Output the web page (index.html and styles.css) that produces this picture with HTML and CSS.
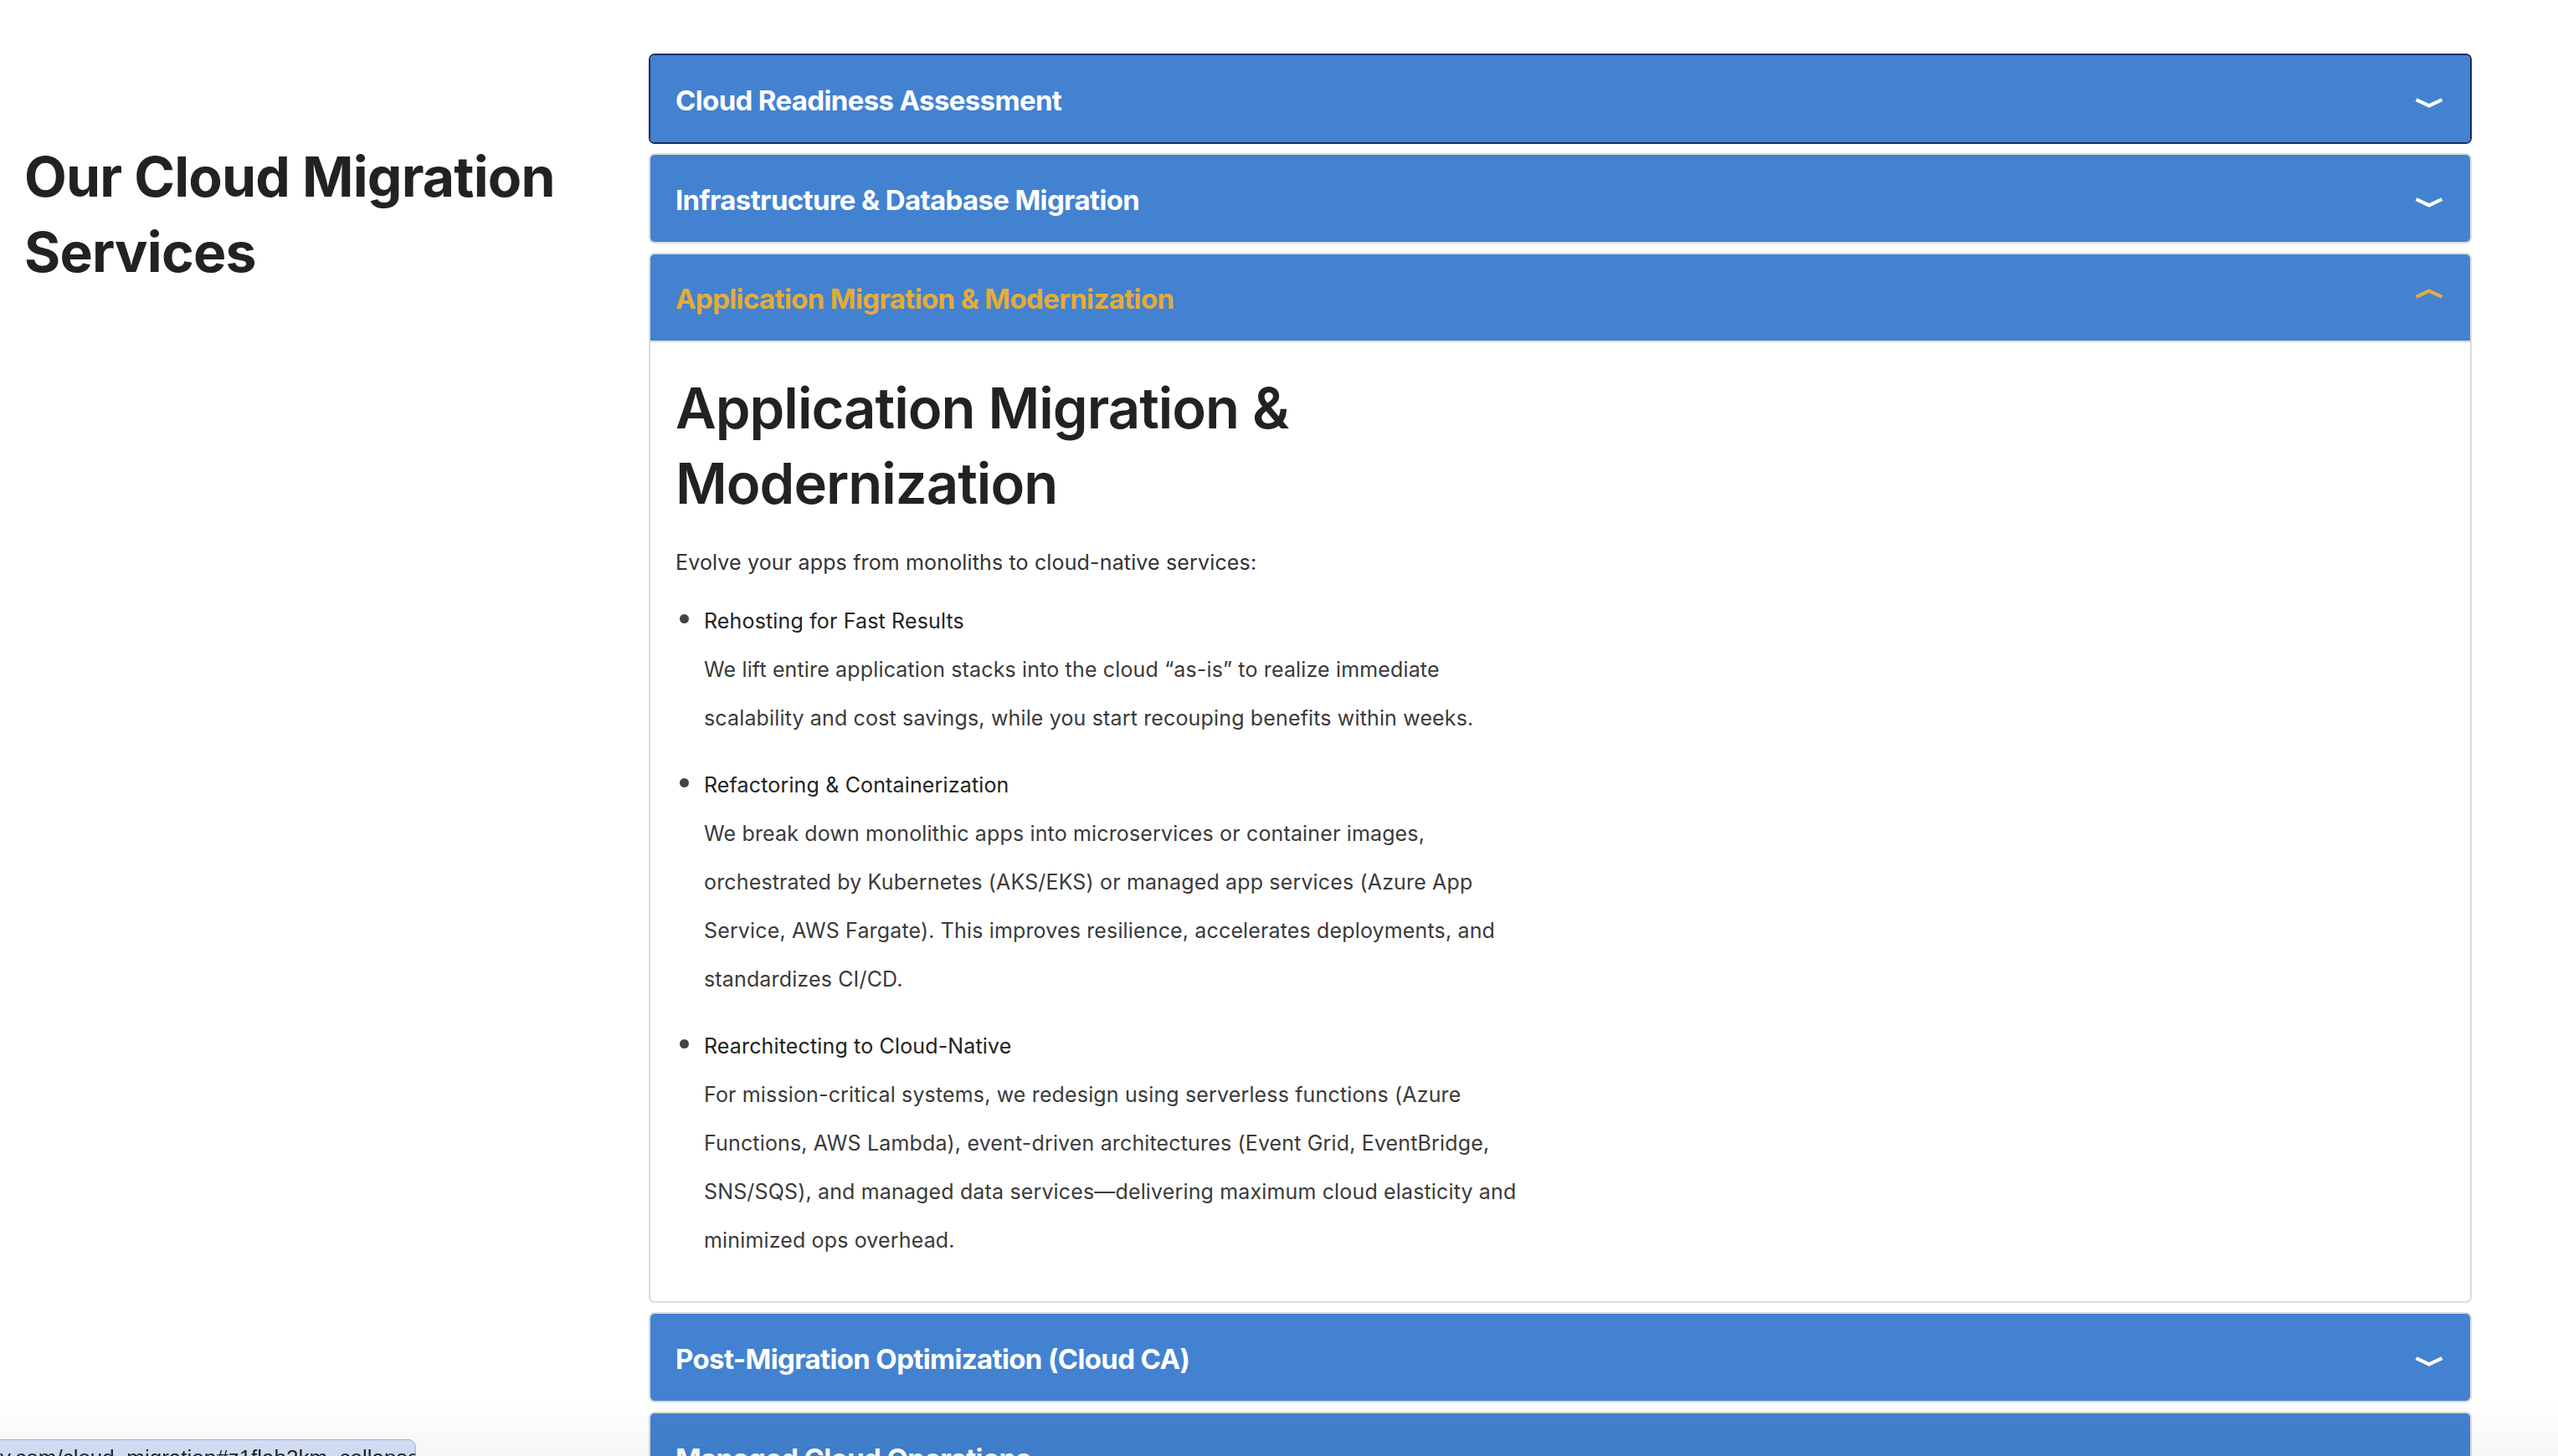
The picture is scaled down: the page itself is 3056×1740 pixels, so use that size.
FILE: index.html
```html
<!DOCTYPE html>
<html lang="en">
<head>
<meta charset="utf-8">
<title>Our Cloud Migration Services</title>
<link rel="stylesheet" href="styles.css">
</head>
<body>
<main class="page">
  <section class="intro">
    <h1 class="intro-title">Our Cloud Migration Services</h1>
  </section>
  <section class="accordion">
    <div class="acc-item acc-focus">
      <button class="acc-head">
        <span class="acc-label">Cloud Readiness Assessment</span>
        <svg class="chev" viewBox="0 0 32 32"><polyline points="1.5,17 16,24 30.5,17"/></svg>
      </button>
    </div>
    <div class="acc-item">
      <button class="acc-head">
        <span class="acc-label">Infrastructure &amp; Database Migration</span>
        <svg class="chev" viewBox="0 0 32 32"><polyline points="1.5,17 16,24 30.5,17"/></svg>
      </button>
    </div>
    <div class="acc-item acc-open">
      <button class="acc-head">
        <span class="acc-label">Application Migration &amp; Modernization</span>
        <svg class="chev chev-up" viewBox="0 0 32 32"><polyline points="1.5,17 16,24 30.5,17"/></svg>
      </button>
      <div class="acc-body">
        <div class="acc-content">
          <h2 class="body-title">Application Migration &amp; Modernization</h2>
          <p class="lead">Evolve your apps from monoliths to cloud-native services:</p>
          <ul class="points">
            <li>
              <p class="point-title">Rehosting for Fast Results</p>
              <p class="point-text">We lift entire application stacks into the cloud “as-is” to realize immediate scalability and cost savings, while you start recouping benefits within weeks.</p>
            </li>
            <li>
              <p class="point-title">Refactoring &amp; Containerization</p>
              <p class="point-text">We break down monolithic apps into microservices or container images, orchestrated by Kubernetes (AKS/EKS) or managed app services (Azure App Service, AWS Fargate). This improves resilience, accelerates deployments, and standardizes CI/CD.</p>
            </li>
            <li>
              <p class="point-title">Rearchitecting to Cloud-Native</p>
              <p class="point-text">For mission-critical systems, we redesign using serverless functions (Azure Functions, AWS Lambda), event-driven architectures (Event Grid, EventBridge, SNS/SQS), and managed data services—delivering maximum cloud elasticity and minimized ops overhead.</p>
            </li>
          </ul>
        </div>
      </div>
    </div>
    <div class="acc-item">
      <button class="acc-head">
        <span class="acc-label">Post-Migration Optimization (Cloud CA)</span>
        <svg class="chev" viewBox="0 0 32 32"><polyline points="1.5,17 16,24 30.5,17"/></svg>
      </button>
    </div>
    <div class="acc-item">
      <button class="acc-head">
        <span class="acc-label">Managed Cloud Operations</span>
        <svg class="chev" viewBox="0 0 32 32"><polyline points="1.5,17 16,24 30.5,17"/></svg>
      </button>
    </div>
  </section>
</main>
<div class="bottom-fade"></div>
<div class="status-url">y.com/cloud_migration#z1flab2km_collapse</div>
</body>
</html>
```
FILE: styles.css
```css
* { box-sizing: border-box; }

html, body {
  margin: 0;
  padding: 0;
  background: #ffffff;
}

body {
  font-family: Inter, "Noto Sans", "Liberation Sans", sans-serif;
  color: #222222;
}

.page {
  display: grid;
  grid-template-columns: 775px 2178px;
  padding-top: 64px;
  padding-bottom: 40px;
}

.intro {
  padding-left: 29px;
}

.intro-title {
  margin: 102px 0 0;
  font-size: 66px;
  line-height: 90px;
  font-weight: 700;
  letter-spacing: -0.8px;
  color: #222222;
  max-width: 720px;
}

.accordion {
  display: flex;
  flex-direction: column;
  gap: 11px;
}

.acc-item {
  border: 2px solid #dcdcdc;
  border-radius: 7px;
  overflow: hidden;
  background: #ffffff;
}

.acc-focus {
  border-color: #1a2b6a;
}

.acc-head {
  display: flex;
  align-items: center;
  justify-content: space-between;
  width: 100%;
  height: 104px;
  margin: 0;
  padding: 3px 32px 0 30px;
  border: 0;
  background: #4382d0;
  color: #ffffff;
  font-family: Inter, "Noto Sans", sans-serif;
  font-size: 33px;
  font-weight: 700;
  letter-spacing: -0.65px;
  text-align: left;
  cursor: pointer;
}

.acc-head .chev {
  margin-top: -3px;
}

.acc-open .acc-head {
  color: #e4ac38;
  border-bottom: 2px solid #dcdcdc;
  height: 105px;
}

.chev {
  width: 34px;
  height: 34px;
  flex: none;
  fill: none;
  stroke: #ffffff;
  stroke-width: 4;
  stroke-linejoin: miter;
}

.chev-up {
  transform: rotate(180deg);
  stroke: #e4ac38;
}

.acc-body {
  padding: 34px 30px 44px 30px;
}

.acc-content {
  width: 1024px;
}

.body-title {
  margin: 0;
  font-size: 67px;
  line-height: 90px;
  font-weight: 600;
  letter-spacing: -1px;
  color: #222222;
}

.lead {
  margin: 20px 0 0;
  font-size: 25px;
  letter-spacing: 0.15px;
  line-height: 58px;
  color: #333333;
}

.points {
  list-style: none;
  margin: 12px 0 0;
  padding: 0;
}

.points li {
  position: relative;
  padding-left: 34px;
  margin-bottom: 22px;
}

.points li:last-child {
  margin-bottom: 0;
}

.points li::before {
  content: "";
  position: absolute;
  left: 5px;
  top: 21px;
  width: 11px;
  height: 11px;
  border-radius: 50%;
  background: #444444;
}

.point-title,
.point-text {
  margin: 0;
  font-size: 25px;
  letter-spacing: 0.15px;
  line-height: 58px;
}

.point-title {
  color: #222222;
}

.point-text {
  color: #3a3a3a;
}

.bottom-fade {
  position: fixed;
  left: 0;
  right: 0;
  bottom: 0;
  height: 70px;
  background: linear-gradient(to bottom, rgba(0, 0, 0, 0), rgba(0, 0, 0, 0.035));
  pointer-events: none;
}

.status-url {
  position: fixed;
  left: 0;
  bottom: -22px;
  width: 497px;
  height: 42px;
  padding: 4px 16px 0 0;
  background: #d0dbf1;
  border: 1px solid #a7b1c3;
  border-left: 0;
  border-top-right-radius: 9px;
  font-family: "Liberation Sans", Arial, sans-serif;
  font-size: 26px;
  line-height: 34px;
  color: #222222;
  text-align: right;
  white-space: nowrap;
  overflow: hidden;
}
```
